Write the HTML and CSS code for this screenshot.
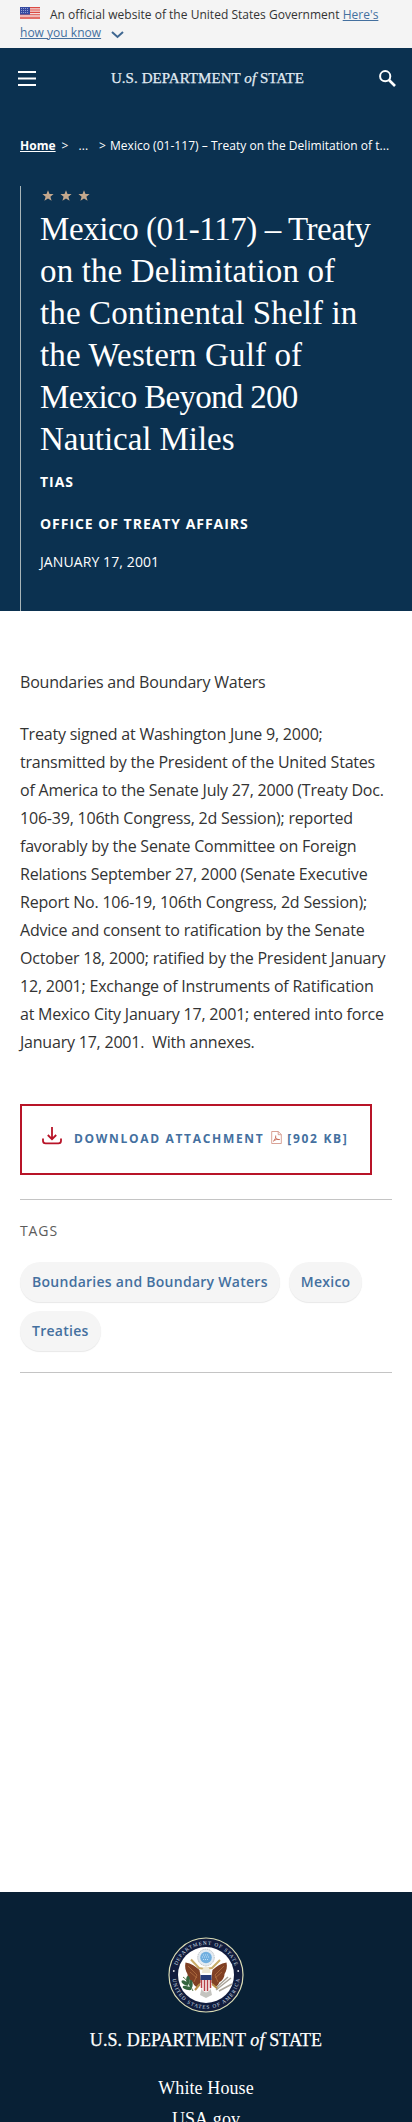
FILE: index.html
```html
<!DOCTYPE html>
<html lang="en">
<head>
<meta charset="utf-8">
<title>Mexico (01-117) – U.S. Department of State</title>
<link rel="stylesheet" href="styles.css">
</head>
<body>
<div class="page">
  <div class="banner">
    <svg class="flag" width="20" height="12" viewBox="0 0 20 12"><rect width="20" height="12" fill="#f4dcdc"/><path d="M0 .6h20M0 3h20M0 5.4h20M0 7.8h20M0 10.2h20M0 11.7h20" stroke="#dc4a42" stroke-width="1.1"/><rect width="10" height="7.6" fill="#3549a0"/><path d="M1 1.5h8M1 3.5h8M1 5.5h8" stroke="#a9b2e0" stroke-width=".8" stroke-dasharray="1 1"/></svg><span class="official">An official website of the United States Government</span> <a href="#">Here's<br>how you know</a><svg class="chev" width="13" height="8" viewBox="0 0 13 8"><path d="M1 1l5.5 5L12 1" fill="none" stroke="#3f6791" stroke-width="2"/></svg>
  </div>
  <header class="topbar">
    <svg width="18" height="15" viewBox="0 0 18 15"><path d="M0 1h18M0 7.5h18M0 14h18" stroke="#fff" stroke-width="2"/></svg>
    <div class="wordmark">U.S. DEPARTMENT <i>of</i> STATE</div>
    <svg width="17" height="17" viewBox="0 0 17 17" fill="none" stroke="#fff"><circle cx="6.2" cy="6.2" r="5.1" stroke-width="2"/><path d="M10 10l6 6" stroke-width="2.6"/></svg>
  </header>
  <section class="hero">
    <nav class="crumbs"><a href="#">Home</a><span class="c1">&gt;</span><span class="c2">...</span><span class="c3">&gt;</span><span class="c4">Mexico (01-117) – Treaty on the Delimitation of t...</span></nav>
    <div class="intro">
      <svg class="stars" width="50" height="12" viewBox="0 0 50 12" fill="#c4a88d"><path id="star" d="M6 .3l1.500 3.700h4.100L8.400 6.700l1.200 4.100L6 8.400l-3.600 2.400 1.200-4.100L.4 4h4.100z"/><use href="#star" x="18"/><use href="#star" x="36"/></svg>
      <h1><span class="t1">Mexico (01-117) – Treaty</span><span>on the Delimitation of</span><span>the Continental Shelf in</span><span>the Western Gulf of</span><span class="t5">Mexico Beyond 200</span><span class="t6">Nautical Miles</span></h1>
      <p class="kicker">TIAS</p>
      <p class="kicker office">OFFICE OF TREATY AFFAIRS</p>
      <p class="date">JANUARY 17, 2001</p>
    </div>
  </section>
  <main>
    <p class="lead">Boundaries and Boundary Waters</p>
    <p class="copy">Treaty signed at Washington June 9, 2000;<br>transmitted by the President of the United States<br>of America to the Senate July 27, 2000 (Treaty Doc.<br>106-39, 106th Congress, 2d Session); reported<br>favorably by the Senate Committee on Foreign<br>Relations September 27, 2000 (Senate Executive<br>Report No. 106-19, 106th Congress, 2d Session);<br>Advice and consent to ratification by the Senate<br>October 18, 2000; ratified by the President January<br>12, 2001; Exchange of Instruments of Ratification<br>at Mexico City January 17, 2001; entered into force<br>January 17, 2001.&nbsp; With annexes.</p>
    <a class="download" href="#">
      <svg width="20" height="18" viewBox="0 0 20 18" fill="none" stroke="#b81428" stroke-width="1.8"><path d="M10 0v12M5.8 8L10 12.2 14.2 8M1 11.500v2.300q0 2.600 2.600 2.600h12.800q2.600 0 2.600-2.600v-2.300"/></svg>
      <span class="dl-text">DOWNLOAD ATTACHMENT</span>
      <svg class="pdf" width="11" height="13" viewBox="0 0 11 13" fill="none" stroke="#cf8c7c"><path d="M.7.5h6.600l3 3v9H.7zM7.200.5v3.200h3" stroke-width=".8"/><path d="M2.300 10.200C4 9 5 6.500 4.700 4.500M4.700 6.500c.8 1.500 2.200 2.300 4 2M2.500 10c1.500-1.300 4-2 6-1.400" stroke-width=".9" stroke="#c56450"/></svg>
      <span class="dl-size">[902 KB]</span>
    </a>
    <section class="tags">
      <h2>TAGS</h2>
      <div class="pills"><a href="#">Boundaries and Boundary Waters</a><a href="#">Mexico</a><a href="#">Treaties</a></div>
    </section>
  </main>
  <footer>
    <svg class="seal" width="76" height="76" viewBox="-38 -38 76 76">
      <defs><path id="arcTop" d="M-30.300 0a30.300 30.300 0 0 1 60.600 0"/><path id="arcBottom" d="M-33.800 0a33.800 33.800 0 0 0 67.600 0"/></defs>
      <circle r="37" fill="#111c3d" stroke="#d9dbb4" stroke-width="1.200"/>
      <circle r="28" fill="#fff"/>
      <g class="seal-text"><text><textPath href="#arcTop" startOffset="50%" textLength="76">DEPARTMENT OF STATE</textPath></text><text><textPath href="#arcBottom" startOffset="50%" textLength="98">UNITED STATES OF AMERICA</textPath></text></g>
      <circle cx="-32.200" cy="-4" r=".9" fill="#e4e4e8"/><circle cx="32.200" cy="-4" r=".9" fill="#e4e4e8"/>
      <circle cy="-17.500" r="8.300" fill="#e3ebf2" stroke="#a9adb0" stroke-width=".8" stroke-dasharray="1.200 .7"/><circle cy="-17.500" r="5.800" fill="#71afe0"/><path d="M-4-18h8M-3-20h6M-3-15.500h6" stroke="#d3eafa" stroke-width=".8" stroke-dasharray="1 1"/>
      <path d="M-15-15.500L-7-7l6 1 7-1 8-8" fill="none" stroke="#c9ac68" stroke-width="2"/>
      <path d="M-20.500-12.500c6 1 10 4 14 7.500l2 12-5 5c-2-1-3-3-4-5-3-1-5-5-5-8-2-3-3-7-2-11.500zM20.500-12.500c-6 1-10 4-14 7.500l-2 12 5 5c2-1 3-3 4-5 3-1 5-5 5-8 2-3 3-7 2-11.500z" fill="#804024"/>
      <path d="M-18-9l9 9-3 7M-16-3l7 6M18-9L9 0l3 7M16-3L9 3" fill="none" stroke="#b87545" stroke-width=".7"/>
      <path d="M-3.500-6l3-3 3.500 2 2 5h-9z" fill="#eee8d6"/><path d="M-6 9l-5 6M6 9l6 5" stroke="#b99048" stroke-width="2"/>
      <path d="M-6 20l2-9h8l2 9-6 3z" fill="#c4c4bf"/><path d="M-5.500 0h11v11.500q-1 5-5.500 6-4.500-1-5.500-6z" fill="#f7eded"/><path d="M-4.500 4v9M-1.500 4v12M1.500 4v12M4.500 4v9" stroke="#b84048" stroke-width="1.400"/><path d="M-5.500 0h11v5h-11z" fill="#273b77"/>
      <path d="M-23 2q5 3 10 14" fill="none" stroke="#537344" stroke-width="1"/><g fill="#34663f"><ellipse cx="-21" cy="8" rx="4" ry="1.800" transform="rotate(35 -21 8)"/><ellipse cx="-18" cy="5" rx="1.800" ry="4"/><ellipse cx="-19" cy="13" rx="4.500" ry="1.700" transform="rotate(15 -19 13)"/><ellipse cx="-15" cy="9" rx="1.700" ry="4"/></g>
      <path d="M10 15L25 3M11 12L22 2M13 16l13-7" stroke="#aaa499" stroke-width="1.500"/>
    </svg>
    <div class="wordmark big">U.S. DEPARTMENT <i>of</i> STATE</div>
    <a class="flink" href="#">White House</a>
    <a class="flink" href="#">USA.gov</a>
  </footer>
</div>
</body>
</html>
```
FILE: styles.css
```css
* { box-sizing: border-box; }
body { margin: 0; font-family: "Open Sans", "Noto Sans", sans-serif; color: #333; background: #fff; }
p, h1, h2 { margin: 0; }
.page { width: 412px; height: 2122px; overflow: hidden; display: flex; flex-direction: column; }
.banner { height: 48px; flex: none; background: #f4f4f4; padding: 6px 0 0 20px; font-size: 12px; line-height: 18px; letter-spacing: .02px; white-space: nowrap; }
.banner a { color: #44709f; text-decoration: underline; }
.flag { margin-right: 10px; vertical-align: 0; }
.chev { margin-left: 10px; vertical-align: -2px; }
.topbar { height: 60px; flex: none; background: #0b3150; display: flex; align-items: center; justify-content: space-between; padding: 0 16px 0 18px; }
.wordmark { font-family: "Liberation Serif", serif; font-size: 15px; letter-spacing: .06px; color: #e1ecf4; white-space: nowrap; line-height: 20px; -webkit-text-stroke: .25px currentColor; }
.hero { height: 503px; flex: none; background: #0b3150; padding: 28px 0 0 20px; color: #fff; }
.crumbs { display: flex; height: 20px; font-size: 12px; line-height: 20px; white-space: nowrap; letter-spacing: .03px; }
.crumbs a { color: #fff; font-weight: 700; text-decoration: underline; }
.c1 { margin-left: 6px; }
.c2 { margin-left: 10px; }
.c3 { margin-left: 11px; }
.c4 { margin-left: 4px; }
.intro { margin-top: 30px; height: 425px; border-left: 1px solid #a8b5b8; padding: 4px 0 0 19px; }
.stars { display: block; margin-left: 2px; }
h1 { margin-top: 6px; font: 400 33px/42px "Liberation Serif", serif; letter-spacing: .13px; white-space: nowrap; }
h1 span { display: block; }
h1 .t1 { letter-spacing: -.43px; }
h1 .t5 { letter-spacing: -.7px; }
h1 .t6 { letter-spacing: -.05px; }
.kicker { margin-top: 12px; font-size: 14px; line-height: 20px; font-weight: 700; letter-spacing: .96px; }
.office { margin-top: 22px; }
.date { margin-top: 18px; font-size: 14px; line-height: 20px; letter-spacing: .1px; }
main { flex: none; height: 1281px; padding: 57px 20px 0; }
.lead, .copy { font-size: 16px; line-height: 28px; letter-spacing: -.21px; white-space: nowrap; }
.lead { margin-top: 0; }
.copy { margin-top: 24px; }
.download { margin-top: 48px; width: 352px; height: 71px; border: 2px solid #b81428; display: flex; align-items: flex-start; padding: 21px 0 0 20px; color: #44709f; text-decoration: none; font-size: 12px; line-height: 24px; font-weight: 700; letter-spacing: 1.68px; white-space: nowrap; }
.dl-text { margin-left: 12px; }
.pdf { margin: 4px 0 0 7px; }
.dl-size { margin-left: 5px; }
.tags { margin-top: 24px; height: 174px; border: solid #c4c4c4; border-width: 1px 0; padding-top: 20px; }
h2 { font-size: 14px; line-height: 22px; font-weight: 500; letter-spacing: .9px; color: #5c5c5c; }
.pills { margin-top: 20px; display: flex; flex-wrap: wrap; gap: 9px; }
.pills a { height: 40px; border-radius: 20px; padding: 0 12px; background: #f5f5f5; box-shadow: 0 1px 1px #e8e8e8; color: #44709f; text-decoration: none; font-size: 14px; line-height: 39px; font-weight: 600; letter-spacing: .27px; white-space: nowrap; }
footer { flex: none; height: 230px; background: #082035; display: flex; flex-direction: column; align-items: center; padding-top: 45px; }
.seal { display: block; flex: none; }
.seal-text { font: 5.2px "Liberation Serif", serif; fill: #dce1ee; text-anchor: middle; }
.big { margin-top: 15px; font-size: 18px; letter-spacing: .1px; line-height: 24px; color: #fff; }
.flink { font: 18px/31px "Liberation Serif", serif; letter-spacing: .1px; color: #fff; text-decoration: none; }
.big + .flink { margin-top: 21px; }
```
